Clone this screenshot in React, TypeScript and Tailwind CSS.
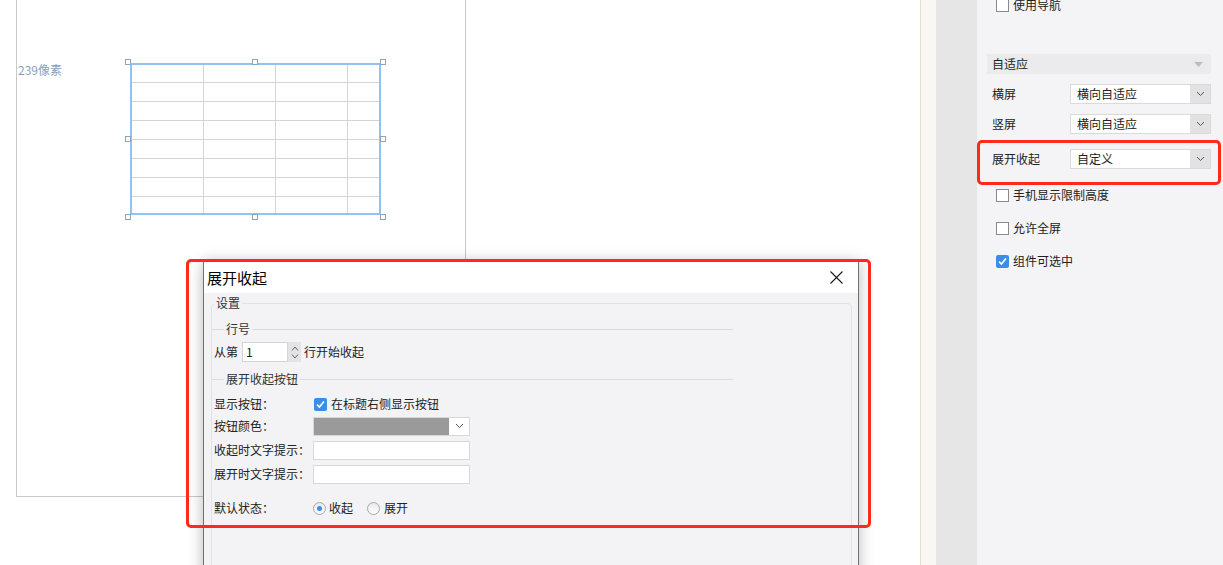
import React from "react";

const FONT = { fontFamily: '"Noto Sans CJK SC", "Noto Sans", sans-serif' };

function Chevron({ className = "" }: { className?: string }) {
  return (
    <svg width="9" height="6" viewBox="0 0 9 6" className={className}>
      <path d="M1 1 L4.5 4.5 L8 1" fill="none" stroke="#555" strokeWidth="1" />
    </svg>
  );
}

function Box({ checked = false }: { checked?: boolean }) {
  if (checked)
    return (
      <span className="w-[13px] h-[13px] bg-[#3b8ee8] rounded-[2px] flex items-center justify-center shrink-0">
        <svg width="11" height="11" viewBox="0 0 11 11">
          <path d="M2 5.6 L4.4 8 L9 2.5" fill="none" stroke="#fff" strokeWidth="1.6" />
        </svg>
      </span>
    );
  return <span className="w-[13px] h-[13px] bg-white border border-[#8a8a8a] shrink-0" />;
}

function Radio({ checked = false }: { checked?: boolean }) {
  return (
    <span className="w-[13px] h-[13px] rounded-full border border-[#a8a8a8] bg-gradient-to-b from-[#e8e8e8] to-white flex items-center justify-center shrink-0">
      {checked && <span className="w-[5px] h-[5px] rounded-full bg-[#3a8ee6]" />}
    </span>
  );
}

function Select({ value }: { value: string }) {
  return (
    <div className="ml-auto mr-[12px] w-[141px] h-[20px] flex border border-[#dadada] bg-white">
      <div className="flex-1 pl-[6px] text-[12px] leading-[18px] text-[#222]">{value}</div>
      <div className="w-[20px] bg-[#e2e2e2] flex items-center justify-center">
        <Chevron />
      </div>
    </div>
  );
}

function Sep({ label }: { label: string }) {
  return (
    <div className="w-[521px] h-[16px] flex items-center">
      <div className="w-[12px] h-px bg-[#dcdcdc]" />
      <span className="px-[2px] text-[12px] leading-[16px] text-[#333]">{label}</span>
      <div className="flex-1 h-px bg-[#dcdcdc]" />
    </div>
  );
}

export default function App() {
  const rows = Array.from({ length: 8 });
  const cols = Array.from({ length: 4 });
  return (
    <div className="relative w-[1223px] h-[565px] overflow-hidden bg-white flex" style={FONT}>
      {/* canvas area */}
      <div className="w-[920px] h-full bg-white">
        <div className="relative ml-[16px] w-[450px] h-[497px] border-l border-r border-b border-[#c8c8c8]">
          <span className="absolute left-[1px] top-[62px] text-[12px] leading-[16px] text-[#8aa0bc]">239像素</span>
          <div className="absolute left-[113px] top-[63px] w-[251px] h-[152px] border-2 border-[#90c2f2] bg-white">
            <div className="grid grid-cols-[72px_72px_72px_1fr] grid-rows-[18px_19px_19px_19px_19px_19px_19px_1fr] w-full h-full">
              {rows.map((_, r) =>
                cols.map((_, c) => (
                  <div
                    key={`${r}-${c}`}
                    className={`${c < 3 ? "border-r" : ""} ${r < 7 ? "border-b" : ""} border-[#d4d4d4]`}
                  />
                ))
              )}
            </div>
            {[
              [-5, -4],
              [122, -4],
              [250, -4],
              [-5, 73],
              [250, 73],
              [-5, 151],
              [122, 151],
              [250, 151],
            ].map(([x, y], i) => (
              <span
                key={i}
                className="absolute w-[6px] h-[6px] border border-[#8fa3bd] bg-white"
                style={{ left: x - 2, top: y - 2 }}
              />
            ))}
          </div>
        </div>
      </div>

      {/* gutters */}
      <div className="w-[16px] h-full border-l border-[#e8dfca] bg-[#f8f7f4]" />
      <div className="w-[41px] h-full bg-[#e6e6e6]" />

      {/* property panel */}
      <div className="w-[246px] h-full bg-[#f4f4f6] flex flex-col text-[12px] text-[#222]">
        <div className="mt-[-3px] h-[16px] pl-[19px] flex items-center gap-[4px]">
          <Box />
          <span className="leading-[16px]">使用导航</span>
        </div>
        <div className="mt-[41px] ml-[10px] w-[224px] h-[20px] bg-[#ebebeb] flex items-center pl-[5px] pr-[8px]">
          <span className="leading-[16px] flex-1">自适应</span>
          <svg width="9" height="5" viewBox="0 0 9 5">
            <path d="M0 0 L9 0 L4.5 5 Z" fill="#bdbdbd" />
          </svg>
        </div>
        <div className="mt-[10px] h-[20px] flex items-center pl-[15px]">
          <span className="leading-[16px]">横屏</span>
          <Select value="横向自适应" />
        </div>
        <div className="mt-[10px] h-[20px] flex items-center pl-[15px]">
          <span className="leading-[16px]">竖屏</span>
          <Select value="横向自适应" />
        </div>
        <div className="mt-[15px] h-[20px] flex items-center pl-[15px]">
          <span className="leading-[16px]">展开收起</span>
          <Select value="自定义" />
        </div>
        <div className="mt-[16px] h-[20px] pl-[19px] flex items-center gap-[4px]">
          <Box />
          <span className="leading-[16px]">手机显示限制高度</span>
        </div>
        <div className="mt-[13px] h-[20px] pl-[19px] flex items-center gap-[4px]">
          <Box />
          <span className="leading-[16px]">允许全屏</span>
        </div>
        <div className="mt-[13px] h-[20px] pl-[19px] flex items-center gap-[4px]">
          <Box checked />
          <span className="leading-[16px]">组件可选中</span>
        </div>
      </div>

      {/* dialog window */}
      <div className="absolute left-[203px] top-[262px] w-[656px] h-[320px] flex flex-col border-l border-r border-[#707070] shadow-[0_0_14px_rgba(0,0,0,0.28)]">
        <div className="h-[31px] bg-white flex items-center pl-[3px] pr-[15px]">
          <span className="flex-1 text-[15px] leading-[20px] text-black">展开收起</span>
          <svg width="13" height="13" viewBox="0 0 13 13">
            <path d="M0.5 0.5 L12.5 12.5 M12.5 0.5 L0.5 12.5" stroke="#1a1a1a" strokeWidth="1.1" />
          </svg>
        </div>
        <div className="flex-1 bg-[#f3f3f5] pt-[2px] pl-[7px] pr-[6px]">
          <fieldset className="h-full border border-[#e2e2e6] rounded-[5px] text-[12px] text-[#222]">
            <legend className="ml-[2px] px-[2px] leading-[16px] text-[#333]">设置</legend>
            <div className="mt-[10px]">
              <Sep label="行号" />
            </div>
            <div className="mt-[5px] h-[20px] flex items-center pl-[2px]">
              <span className="leading-[16px]">从第</span>
              <div className="ml-[4px] w-[46px] h-[20px] bg-white border border-[#d4d4d4] pl-[3px] leading-[18px]">1</div>
              <div className="w-[13px] h-[20px] bg-[#e3e3e3] flex flex-col items-center justify-center gap-[3px]">
                <svg width="8" height="5" viewBox="0 0 8 5">
                  <path d="M1 4.5 L4 1 L7 4.5" fill="none" stroke="#666" strokeWidth="1" />
                </svg>
                <svg width="8" height="5" viewBox="0 0 8 5">
                  <path d="M1 0.5 L4 4 L7 0.5" fill="none" stroke="#666" strokeWidth="1" />
                </svg>
              </div>
              <span className="ml-[3px] leading-[16px]">行开始收起</span>
            </div>
            <div className="mt-[9px]">
              <Sep label="展开收起按钮" />
            </div>
            <div className="mt-[9px] h-[16px] flex items-center pl-[2px]">
              <span className="w-[99px] leading-[16px]">显示按钮：</span>
              <span className="ml-[1px]">
                <Box checked />
              </span>
              <span className="ml-[4px] leading-[16px]">在标题右侧显示按钮</span>
            </div>
            <div className="mt-[5px] h-[18px] flex items-center pl-[2px]">
              <span className="w-[99px] leading-[16px]">按钮颜色：</span>
              <div className="w-[157px] h-[19px] flex border border-[#d8d8d8] bg-white">
                <div className="flex-1 bg-[#9a9a9a]" />
                <div className="w-[20px] bg-white flex items-center justify-center">
                  <Chevron />
                </div>
              </div>
            </div>
            <div className="mt-[6px] h-[18px] flex items-center pl-[2px]">
              <span className="w-[99px] leading-[16px]">收起时文字提示：</span>
              <div className="w-[157px] h-[19px] border border-[#d8d8d8] bg-white" />
            </div>
            <div className="mt-[6px] h-[18px] flex items-center pl-[2px]">
              <span className="w-[99px] leading-[16px]">展开时文字提示：</span>
              <div className="w-[157px] h-[19px] border border-[#d8d8d8] bg-white" />
            </div>
            <div className="mt-[17px] h-[16px] flex items-center pl-[2px]">
              <span className="w-[99px] leading-[16px]">默认状态：</span>
              <Radio checked />
              <span className="ml-[3px] leading-[16px]">收起</span>
              <span className="ml-[14px]">
                <Radio />
              </span>
              <span className="ml-[4px] leading-[16px]">展开</span>
            </div>
          </fieldset>
        </div>
      </div>

      {/* red annotation boxes */}
      <div className="absolute left-[186px] top-[259px] w-[685px] h-[269px] border-[3px] border-[#ff2a1a] rounded-[5px]" />
      <div className="absolute left-[977px] top-[140px] w-[244px] h-[45px] border-[3px] border-[#ff2a1a] rounded-[5px]" />
    </div>
  );
}
